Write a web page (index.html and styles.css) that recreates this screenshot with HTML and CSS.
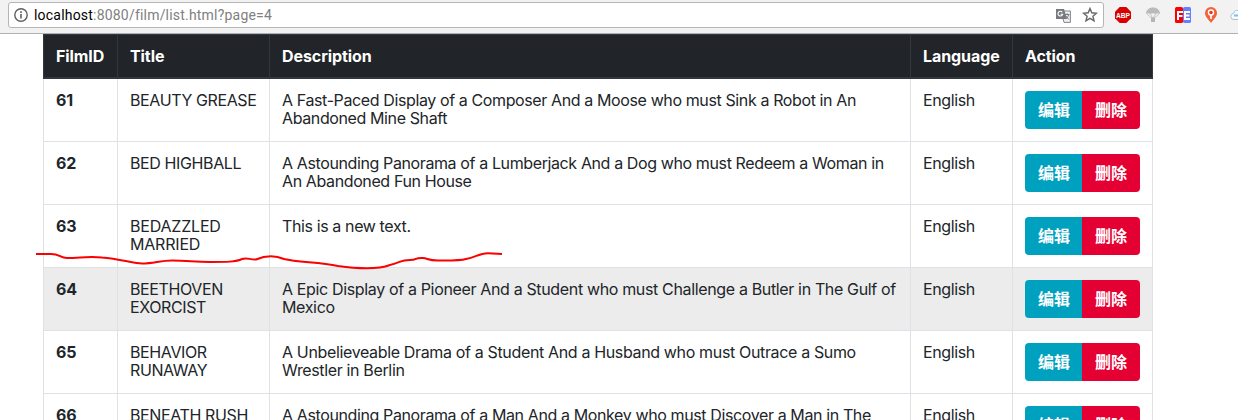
FILE: index.html
```html
<!DOCTYPE html>
<html lang="en">
<head>
<meta charset="utf-8">
<title>Film list</title>
<link rel="stylesheet" href="styles.css">
</head>
<body>
<header class="toolbar">
  <div class="address">
    <svg class="info" width="14" height="14" viewBox="0 0 14 14"><circle cx="7" cy="7" r="6.2" fill="none" stroke="#5f6066" stroke-width="1.4"/><path d="M7 6v4.5M7 3.3v1.6" stroke="#5f6066" stroke-width="1.6"/></svg>
    <span class="url"><b>localhost</b>:8080/film/list.html?page=4</span>
    <svg class="translate" width="15" height="15" viewBox="0 0 15 15"><path d="M5 3h9.4v11.4H8z" fill="#eee" stroke="#85868c"/><path d="M0 1h8l3 10H0z" fill="#777980"/><path d="M6.3 4.2a2.4 2.4 0 1 0 .4 2H4.6" fill="none" stroke="#fff" stroke-width="1.1"/><path d="M8.800 6.500h4.600M11.200 5.400v1.100M12.600 6.700c-.4 2-1.400 3.300-2.500 4.200M9.800 8l3 3.400" fill="none" stroke="#777980"/></svg>
    <svg class="star" width="16" height="16" viewBox="0 0 16 16"><path d="M8 1.500l1.800 4.300 4.700.4-3.600 3 1.100 4.600L8 11.400l-4 2.400 1.100-4.600-3.600-3 4.700-.4z" fill="none" stroke="#64656b" stroke-width="1.400"/></svg>
  </div>
  <svg class="ext" width="16" height="16" viewBox="0 0 16 16"><path d="M4.700 0h6.600L16 4.700v6.600L11.300 16H4.700L0 11.300V4.700z" fill="#d90000"/><text class="abp" x="8" y="11" text-anchor="middle" textLength="14" lengthAdjust="spacingAndGlyphs">ABP</text></svg>
  <svg class="ext" width="16" height="16" viewBox="0 0 16 16"><path d="M1 7C1 3 4 .5 8 .5S15 3 15 7c-1.500-1-3-1-4 0-2-1-4-1-6 0-1-1-2.500-1-4 0z" fill="#bababa"/><path d="M2 7l5 4.500M14 7l-5 4.500M5.500 7L7.500 11M10.500 7L8.500 11" stroke="#c5c5c5"/><path d="M6 10.500h4v4.500H6z" fill="#b5b5b5"/></svg>
  <svg class="ext fe" width="16" height="16" viewBox="0 0 16 16"><rect width="8" height="16" rx="1.500" fill="#f00"/><rect x="8" width="8" height="16" rx="1.500" fill="#6580ff"/><path d="M3 13V5h5M3 9h4.500M15 5H10v7H15M10 8.500H14.500" fill="none" stroke="#fff" stroke-width="2"/></svg>
  <svg class="ext pin" width="16" height="16" viewBox="0 0 16 16"><path d="M8 0a6 6 0 0 1 6 6c0 3.500-3 6-6 10-3-4-6-6.500-6-10a6 6 0 0 1 6-6z" fill="#f4613a"/><circle cx="8" cy="5.500" r="2.500" fill="#dc3b1c" stroke="#fff" stroke-width="1.400"/><path d="M8 8v4" stroke="#fff" stroke-width="1.700"/></svg>
  <svg class="ext cloud" width="16" height="16" viewBox="0 0 16 16"><path d="M4 12.500a3 3 0 0 1-.5-6C4 4 6 3 8 3.500c2-2 6 0 5.500 3.500 3 1 2 5.500-.5 5.500z" fill="#f8fcff" stroke="#a9c2cf"/><path d="M4 8.500h6" stroke="#70c4ee" stroke-width="2"/></svg>
</header>
<main class="page">
<table class="films">
  <colgroup><col class="c-id"><col class="c-title"><col class="c-desc"><col class="c-lang"><col class="c-action"></colgroup>
  <thead><tr><th>FilmID</th><th>Title</th><th>Description</th><th>Language</th><th>Action</th></tr></thead>
  <tbody>
  <tr><th>61</th><td>BEAUTY GREASE</td><td>A Fast-Paced Display of a Composer And a Moose who must Sink a Robot in An<br>Abandoned Mine Shaft</td><td>English</td><td><div class="group"><a class="btn edit">编辑</a><a class="btn delete">删除</a></div></td></tr>
  <tr><th>62</th><td>BED HIGHBALL</td><td>A Astounding Panorama of a Lumberjack And a Dog who must Redeem a Woman in<br>An Abandoned Fun House</td><td>English</td><td><div class="group"><a class="btn edit">编辑</a><a class="btn delete">删除</a></div></td></tr>
  <tr class="marked"><th>63<svg class="stroke" width="470" height="24" viewBox="0 0 470 24"><path d="M0 6H15C24 6 24 10 31 10C44 10 52 8 66 9.500C84 11 98 15.500 106 15.500C118 15.500 124 12.500 136 12.500C152 12.500 158 14 174 14C190 14 200 14 206 11C211 9 214 12 220 11.500C228 8 238 6.500 248 11C262 14.500 282 14 302 18C320 20.500 342 21.500 354 17C366 14 364 12 374 12C382 12 378 9.500 387 10C392 10.500 392 12.500 402 12.500C414 12.500 424 12.800 430 11C440 9 444 5 452 5.200L466 6" fill="none" stroke="#fa0000" stroke-width="2"/></svg></th><td class="wide">BEDAZZLED<br>MARRIED</td><td>This is a new text.</td><td>English</td><td><div class="group"><a class="btn edit">编辑</a><a class="btn delete">删除</a></div></td></tr>
  <tr class="hover"><th>64</th><td>BEETHOVEN<br>EXORCIST</td><td class="loose">A Epic Display of a Pioneer And a Student who must Challenge a Butler in The Gulf of<br>Mexico</td><td>English</td><td><div class="group"><a class="btn edit">编辑</a><a class="btn delete">删除</a></div></td></tr>
  <tr><th>65</th><td>BEHAVIOR<br>RUNAWAY</td><td class="loose">A Unbelieveable Drama of a Student And a Husband who must Outrace a Sumo<br>Wrestler in Berlin</td><td>English</td><td><div class="group"><a class="btn edit">编辑</a><a class="btn delete">删除</a></div></td></tr>
  <tr><th>66</th><td>BENEATH RUSH</td><td>A Astounding Panorama of a Man And a Monkey who must Discover a Man in The</td><td>English</td><td><div class="group"><a class="btn edit">编辑</a><a class="btn delete">删除</a></div></td></tr>
  </tbody>
</table>
</main>
</body>
</html>
```
FILE: styles.css
```css
* { box-sizing: border-box; }
html, body { height: 420px; overflow: hidden; }
body { margin: 0; background: #fff; color: #212529; font: 16px/18px Inter, "Noto Sans CJK SC", sans-serif; letter-spacing: -0.385px; }
.toolbar { display: flex; align-items: flex-start; height: 34px; padding: 2px 0 0 8px; background: #f2f2f2; border-bottom: 1px solid #b0afb3; overflow: hidden; }
.address { flex: none; display: flex; align-items: center; width: 1096px; height: 26px; padding: 0 5px; background: #fff; border: 1px solid #b5b5b5; border-radius: 3px; margin-right: 11px; }
.info { margin-right: 6px; }
.url { flex: 1; color: #808080; font: 14px/20px Roboto, sans-serif; letter-spacing: 0.2px; }
.url b { color: #000; font-weight: 400; }
.translate { margin-right: 11px; }
.ext { flex: none; margin: 5px 14px 0 0; }
.fe { margin-right: 12px; }
.pin { margin-right: 11px; }
.cloud { margin-right: 0; }
.abp { font: 700 8px "Liberation Sans", sans-serif; fill: #fff; letter-spacing: 0; }
.page { height: 386px; padding-left: 43px; overflow: hidden; }
.films { table-layout: fixed; width: 1110px; border-collapse: separate; border-spacing: 0; border-left: 1px solid #dee2e6; }
.c-id { width: 74px; }
.c-title { width: 152px; }
.c-desc { width: 641px; }
.c-lang { width: 102px; }
.c-action { width: 140px; }
.films th, .films td { padding: 12px; text-align: left; vertical-align: top; white-space: nowrap; border-right: 1px solid #dee2e6; border-bottom: 1px solid #dee2e6; }
.films thead { background: #212529; color: #fff; }
.films thead th { height: 45px; border-color: #32383e; border-top: 1px solid #32383e; border-bottom: 2px solid #32383e; letter-spacing: -0.08px; }
.films thead th:first-child { box-shadow: -1px 0 #32383e; }
.films tbody th { letter-spacing: -0.1px; }
.films tbody tr { height: 63px; }
.films .loose { letter-spacing: -0.35px; }
.films .wide { letter-spacing: -0.2px; }
.hover { background: #ececec; }
.group { display: flex; width: 115px; height: 38px; border-radius: 4px; overflow: hidden; }
.btn { padding: 6px 0 0 13px; color: #fff; font: 700 16px/24px "Noto Sans CJK SC", sans-serif; letter-spacing: 0; }
.edit { width: 57px; background: #00a1bf; }
.delete { width: 58px; background: #e50034; }
.marked th { position: relative; }
.stroke { position: absolute; left: -8px; top: 43px; z-index: 1; }
```
